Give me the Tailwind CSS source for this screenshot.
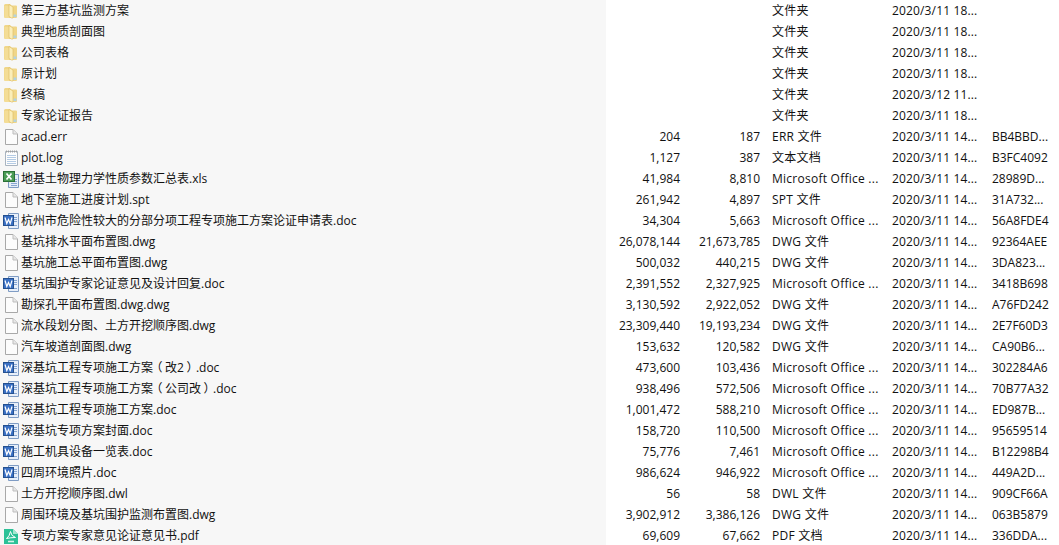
<!DOCTYPE html>
<html lang="zh-CN">
<head>
  <meta charset="UTF-8" />
  <title>文件列表</title>
  <script src="https://cdn.jsdelivr.net/npm/@tailwindcss/browser@4"></script>
</head>
<body class="bg-white overflow-hidden">
  <div id="list" class="w-[1059px] h-[545px] overflow-hidden font-['Open_Sans','Noto_Sans_CJK_SC',sans-serif] text-[12px] text-[#111]"></div>

  <script>
    const icons = {
      folder: `<path d="M1 2.5 Q1 1 2.5 1 H7 L8.5 2.5 H13 Q14 2.5 14 3.5 V14 Q14 15 13 15 H2.5 Q1 15 1 13.5 Z" fill="#f0d688"/>
        <path d="M1.5 3 H6 V15 H2.5 Q1.5 15 1.5 13.5 Z" fill="#f4dd96"/>
        <path d="M6 1.5 L10 4 V15 H8.5 L6 13.5 Z" fill="#fbeeb8" stroke="#dcb95f" stroke-width=".6"/>
        <path d="M10.5 11.5 H13.5 V14 H10.5 Z" fill="#b3d3de"/>`,
      blank: `<path d="M2.5 0.5 H10 L14.5 5 V15.5 H2.5 Z" fill="#fcfcfc" stroke="#a8a8a8"/><path d="M10 0.5 V5 H14.5" fill="#e8e8e8" stroke="#bdbdbd"/>`,
      text: `<path d="M2.5 1.5 H14.5 V15.5 H2.5 Z" fill="#fdfdfd" stroke="#a9b4c0"/><path d="M3.5 0.5 V2.5 M5.5 0.5 V2.5 M7.5 0.5 V2.5 M9.5 0.5 V2.5 M11.5 0.5 V2.5 M13.5 0.5 V2.5" stroke="#a0a0a0"/><path d="M4 5.5 H13 M4 7.5 H13 M4 9.5 H13 M4 11.5 H13 M4 13.5 H13" stroke="#b4cbe4"/>`,
      xls: `<path d="M5.5 3.5 H15.5 V16.5 H5.5 Z" fill="#e6eef8" stroke="#7f9cc4"/><path d="M8 8.5 H14 M8 10.5 H14 M8 12.5 H14 M8 14.5 H14" stroke="#86a5d2"/><rect x="0.5" y="0.5" width="11" height="10" fill="#4a9c55" stroke="#2b7037"/><path d="M3.5 2.5 L8.5 8.5 M8.5 2.5 L3.5 8.5" stroke="#fff" stroke-width="1.7"/>`,
      doc: `<path d="M5.5 0.5 H15.5 V15.5 H5.5 Z" fill="#e8eff9" stroke="#7f9cc4"/><path d="M11 4.5 H14 M11 6.5 H14 M11 8.5 H14 M8 12.5 H14" stroke="#86a5d2"/><rect x="0.5" y="2.5" width="10" height="10" fill="#3a70c4" stroke="#24508f"/><path d="M2 4.5 L3.8 10.5 L5.5 6.5 L7.2 10.5 L9 4.5" fill="none" stroke="#fff" stroke-width="1.2"/>`,
      pdf: `<path d="M1 1 H10 L15 6 V16 H1 Z" fill="#2cc197"/><path d="M10 1 V6 H15" fill="#a5e6cf"/><path d="M3.5 10.5 Q6.5 8.5 7.5 3.5 Q8 8 12.5 9.5 Q7.5 9.5 3.5 10.5 Z" fill="none" stroke="#fff" stroke-width="1"/><path d="M5 13.5 H11" stroke="#d6f4ea" stroke-width="1.6"/>`
    };

    // 全角括号：用比例字形，再在 12px 字格里居中
    const lp = `<span class="inline-block w-3 text-center [font-feature-settings:'palt']">（</span>`;
    const rp = `<span class="inline-block w-3 text-center [font-feature-settings:'palt']">）</span>`;

    const rows = [
      ['folder', '第三方基坑监测方案', '', '', '文件夹', '2020/3/11 18...', ''],
      ['folder', '典型地质剖面图', '', '', '文件夹', '2020/3/11 18...', ''],
      ['folder', '公司表格', '', '', '文件夹', '2020/3/11 18...', ''],
      ['folder', '原计划', '', '', '文件夹', '2020/3/11 18...', ''],
      ['folder', '终稿', '', '', '文件夹', '2020/3/12 11...', ''],
      ['folder', '专家论证报告', '', '', '文件夹', '2020/3/11 18...', ''],
      ['blank', 'acad.err', '204', '187', 'ERR 文件', '2020/3/11 14...', 'BB4BBD...'],
      ['text', 'plot.log', '1,127', '387', '文本文档', '2020/3/11 14...', 'B3FC4092'],
      ['xls', '地基土物理力学性质参数汇总表.xls', '41,984', '8,810', 'Microsoft Office ...', '2020/3/11 14...', '28989D...'],
      ['blank', '地下室施工进度计划.spt', '261,942', '4,897', 'SPT 文件', '2020/3/11 14...', '31A732...'],
      ['doc', '杭州市危险性较大的分部分项工程专项施工方案论证申请表.doc', '34,304', '5,663', 'Microsoft Office ...', '2020/3/11 14...', '56A8FDE4'],
      ['blank', '基坑排水平面布置图.dwg', '26,078,144', '21,673,785', 'DWG 文件', '2020/3/11 14...', '92364AEE'],
      ['blank', '基坑施工总平面布置图.dwg', '500,032', '440,215', 'DWG 文件', '2020/3/11 14...', '3DA823...'],
      ['doc', '基坑围护专家论证意见及设计回复.doc', '2,391,552', '2,327,925', 'Microsoft Office ...', '2020/3/11 14...', '3418B698'],
      ['blank', '勘探孔平面布置图.dwg.dwg', '3,130,592', '2,922,052', 'DWG 文件', '2020/3/11 14...', 'A76FD242'],
      ['blank', '流水段划分图、土方开挖顺序图.dwg', '23,309,440', '19,193,234', 'DWG 文件', '2020/3/11 14...', '2E7F60D3'],
      ['blank', '汽车坡道剖面图.dwg', '153,632', '120,582', 'DWG 文件', '2020/3/11 14...', 'CA90B6...'],
      ['doc', `深基坑工程专项施工方案${lp}改2${rp}.doc`, '473,600', '103,436', 'Microsoft Office ...', '2020/3/11 14...', '302284A6'],
      ['doc', `深基坑工程专项施工方案${lp}公司改${rp}.doc`, '938,496', '572,506', 'Microsoft Office ...', '2020/3/11 14...', '70B77A32'],
      ['doc', '深基坑工程专项施工方案.doc', '1,001,472', '588,210', 'Microsoft Office ...', '2020/3/11 14...', 'ED987B...'],
      ['doc', '深基坑专项方案封面.doc', '158,720', '110,500', 'Microsoft Office ...', '2020/3/11 14...', '95659514'],
      ['doc', '施工机具设备一览表.doc', '75,776', '7,461', 'Microsoft Office ...', '2020/3/11 14...', 'B12298B4'],
      ['doc', '四周环境照片.doc', '986,624', '946,922', 'Microsoft Office ...', '2020/3/11 14...', '449A2D...'],
      ['blank', '土方开挖顺序图.dwl', '56', '58', 'DWL 文件', '2020/3/11 14...', '909CF66A'],
      ['blank', '周围环境及基坑围护监测布置图.dwg', '3,902,912', '3,386,126', 'DWG 文件', '2020/3/11 14...', '063B5879'],
      ['pdf', '专项方案专家意见论证意见书.pdf', '69,609', '67,662', 'PDF 文档', '2020/3/11 14...', '336DDA...']
    ];

    document.getElementById('list').innerHTML = rows.map(([icon, name, size, packed, type, date, crc]) => `
      <div class="flex items-center h-[21px] whitespace-nowrap">
        <div class="flex items-center gap-[2px] w-[606px] h-full pl-[3px] bg-[#f7f7f7]">
          <svg class="w-4 h-4 shrink-0 overflow-visible" viewBox="0 0 16 16">${icons[icon]}</svg>
          <span>${name}</span>
        </div>
        <span class="w-[74px] text-right">${size}</span>
        <span class="w-[80px] text-right">${packed}</span>
        <span class="w-[120px] ml-3 tracking-[0.25px]">${type}</span>
        <span class="w-[100px] tracking-[0.15px]">${date}</span>
        <span>${crc}</span>
      </div>`).join('');
  </script>
</body>
</html>
